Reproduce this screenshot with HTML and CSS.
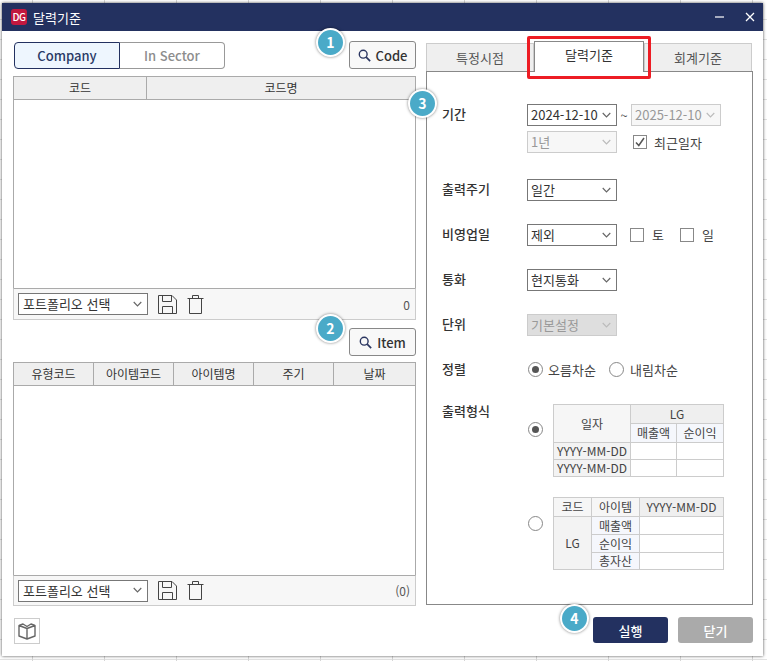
FILE: index.html
```html
<!DOCTYPE html>
<html lang="ko">
<head>
<meta charset="utf-8">
<title>달력기준</title>
<link rel="stylesheet" href="styles.css">
</head>
<body>
<svg width="0" height="0" class="defs">
  <symbol id="chev" viewBox="0 0 10 6"><path d="M.8.8 5 5 9.200.8" fill="none" stroke="currentColor" stroke-width="1.300"/></symbol>
  <symbol id="search" viewBox="0 0 14 14"><circle cx="5.600" cy="5.600" r="4.200" fill="none" stroke="currentColor" stroke-width="1.500"/><path d="m8.800 8.800 4.300 4.300" stroke="currentColor" stroke-width="1.800"/></symbol>
  <symbol id="save" viewBox="0 0 19 19"><path d="M.5.500h13.500l4.500 4.500v13.500H.5z M4.500.5v6h9v-6 M4.500 18.500v-7h10v7" fill="none" stroke="currentColor"/></symbol>
  <symbol id="trash" viewBox="0 0 17 19"><path d="M.5 3.500h16 M2.500 3.500v15h12v-15 M5.500 3.500v-3h6v3" fill="none" stroke="currentColor"/></symbol>
</svg>

<div class="window">
  <header class="titlebar">
    <span class="logo">DG</span>
    <span class="title">달력기준</span>
    <span class="win-ctrl">
      <svg width="10" height="2" viewBox="0 0 10 2"><path d="M0 1h9" stroke="#fff" stroke-width="1.200"/></svg>
      <svg width="10" height="10" viewBox="0 0 10 10"><path d="m1 1 8 8M9 1 1 9" stroke="#fff" stroke-width="1.300"/></svg>
    </span>
  </header>

  <main class="content">
    <section class="left">
      <div class="tool-row">
        <div class="seg">
          <span class="seg-item seg-on">Company</span>
          <span class="seg-item seg-off">In Sector</span>
        </div>
        <button class="find-btn"><svg class="ico-s"><use href="#search"/></svg>Code</button>
      </div>

      <div class="grid grid-a">
        <div class="grid-head head-a"><span class="cell">코드</span><span class="cell">코드명</span></div>
        <div class="grid-body body-a"></div>
        <div class="grid-foot">
          <div class="sel sel-port"><span>포트폴리오 선택</span><svg class="chev"><use href="#chev"/></svg></div>
          <svg class="ico-save"><use href="#save"/></svg>
          <svg class="ico-trash"><use href="#trash"/></svg>
          <span class="count">0</span>
        </div>
      </div>

      <div class="tool-row tool-end">
        <button class="find-btn"><svg class="ico-s"><use href="#search"/></svg>Item</button>
      </div>

      <div class="grid grid-b">
        <div class="grid-head head-b">
          <span class="cell">유형코드</span><span class="cell">아이템코드</span><span class="cell">아이템명</span><span class="cell">주기</span><span class="cell">날짜</span>
        </div>
        <div class="grid-body body-b"></div>
        <div class="grid-foot foot-b">
          <div class="sel sel-port"><span>포트폴리오 선택</span><svg class="chev"><use href="#chev"/></svg></div>
          <svg class="ico-save"><use href="#save"/></svg>
          <svg class="ico-trash"><use href="#trash"/></svg>
          <span class="count">(0)</span>
        </div>
      </div>
    </section>

    <section class="right">
      <nav class="tabs">
        <span class="tab tab-first">특정시점</span>
        <span class="tab tab-active">달력기준</span>
        <span class="tab">회계기준</span>
      </nav>
      <div class="panel">
        <div class="row">
          <label class="lbl">기간</label>
          <div class="period">
            <div class="line">
              <div class="sel"><span>2024-12-10</span><svg class="chev"><use href="#chev"/></svg></div>
              <span class="tilde">~</span>
              <div class="sel sel-off"><span>2025-12-10</span><svg class="chev"><use href="#chev"/></svg></div>
            </div>
            <div class="line line-2">
              <div class="sel sel-off"><span>1년</span><svg class="chev"><use href="#chev"/></svg></div>
              <span class="chk chk-recent"><svg width="10" height="10" viewBox="0 0 10 10"><path d="M1 5.500 3.800 8.500 9 1" fill="none" stroke="#555" stroke-width="1.500"/></svg></span>
              <span class="opt">최근일자</span>
            </div>
          </div>
        </div>
        <div class="row row-freq">
          <label class="lbl">출력주기</label>
          <div class="sel"><span>일간</span><svg class="chev"><use href="#chev"/></svg></div>
        </div>
        <div class="row row-next">
          <label class="lbl">비영업일</label>
          <div class="sel"><span>제외</span><svg class="chev"><use href="#chev"/></svg></div>
          <span class="chk chk-sat"></span><span class="opt opt-day">토</span>
          <span class="chk chk-sun"></span><span class="opt opt-day">일</span>
        </div>
        <div class="row row-next">
          <label class="lbl">통화</label>
          <div class="sel"><span>현지통화</span><svg class="chev"><use href="#chev"/></svg></div>
        </div>
        <div class="row row-next">
          <label class="lbl">단위</label>
          <div class="sel sel-grey"><span>기본설정</span><svg class="chev"><use href="#chev"/></svg></div>
        </div>
        <div class="row row-sort">
          <label class="lbl">정렬</label>
          <span class="radio radio-on radio-sort"></span><span class="opt opt-asc">오름차순</span>
          <span class="radio radio-desc"></span><span class="opt opt-desc">내림차순</span>
        </div>
        <div class="row row-format">
          <label class="lbl lbl-format">출력형식</label>
          <div class="formats">
            <div class="format">
              <span class="radio radio-on radio-f1"></span>
              <table class="sample sample-a">
                <colgroup><col class="c77"><col class="c46"><col class="c47"></colgroup>
                <tr class="r19"><td rowspan="2" class="bg-a">일자</td><td colspan="2" class="bg-b">LG</td></tr>
                <tr class="r19"><td class="bg-c">매출액</td><td class="bg-c">순이익</td></tr>
                <tr class="r17"><td class="bg-d">YYYY-MM-DD</td><td></td><td></td></tr>
                <tr class="r17"><td class="bg-d">YYYY-MM-DD</td><td></td><td></td></tr>
              </table>
            </div>
            <div class="format format-2">
              <span class="radio radio-f2"></span>
              <table class="sample sample-b">
                <colgroup><col class="c38"><col class="c48"><col class="c84"></colgroup>
                <tr class="r19"><td class="bg-a">코드</td><td class="bg-a">아이템</td><td class="bg-b">YYYY-MM-DD</td></tr>
                <tr class="r18"><td rowspan="3" class="bg-d">LG</td><td class="bg-c">매출액</td><td></td></tr>
                <tr class="r18"><td class="bg-c">순이익</td><td></td></tr>
                <tr class="r17"><td class="bg-c">총자산</td><td></td></tr>
              </table>
            </div>
          </div>
        </div>
      </div>
    </section>
  </main>

  <footer class="bottom">
    <button class="book-btn">
      <svg width="18" height="17" viewBox="0 0 18 17"><path d="M1 2.500 9 5.500 17 2.500V13L9 16 1 13ZM9 5.500V16M1 2.500 5 1 9 3.500 13 1 17 2.500" fill="none" stroke="#666" stroke-width="1.400" stroke-linejoin="round"/></svg>
    </button>
    <div class="actions">
      <button class="act act-run">실행</button>
      <button class="act act-close">닫기</button>
    </div>
  </footer>

  <div class="red-box"></div>
  <span class="badge badge-1">1</span>
  <span class="badge badge-2">2</span>
  <span class="badge badge-3">3</span>
  <span class="badge badge-4">4</span>
</div>
</body>
</html>
```
FILE: styles.css
```css
* { box-sizing: border-box; }
html, body { margin: 0; padding: 0; height: 661px; overflow: hidden; }
body {
  font-family: "Noto Sans CJK KR", "Noto Sans", sans-serif;
  font-size: 13px;
  color: #333;
  background-color: #fff;
  background-image:
    repeating-linear-gradient(90deg, transparent 0 32px, #d6d6d6 32px 33px, transparent 33px 72px),
    repeating-linear-gradient(180deg, transparent 0 19px, #e2e2e2 19px 20px);
}
.defs { position: absolute; }
button { font-family: inherit; margin: 0; cursor: pointer; }

.window {
  position: relative;
  width: 761px;
  height: 653px;
  margin: 3px 0 0 2px;
  background: #fff;
  box-shadow: 0 0 3px rgba(0, 0, 0, .7);
  display: flex;
  flex-direction: column;
}

.titlebar {
  height: 28px;
  background: #233160;
  color: #fff;
  display: flex;
  align-items: center;
  padding: 0 8px 0 9px;
  flex: none;
}
.logo {
  width: 16px;
  height: 16px;
  border-radius: 3px;
  background: #c2183f;
  color: #fff;
  font-size: 10px;
  font-weight: 500;
  line-height: 16px;
  text-align: center;
  letter-spacing: -.5px;
}
.title { margin-left: 6px; font-size: 13px; }
.win-ctrl { margin-left: auto; display: flex; align-items: center; gap: 20px; }
.win-ctrl svg { display: block; }

.content { display: flex; gap: 10px; padding: 10px 0 0 11px; flex: none; height: 574px; }
.left { width: 403px; flex: none; }
.right { width: 327px; flex: none; }

.tool-row { height: 28px; display: flex; justify-content: space-between; align-items: flex-end; }
.tool-end { justify-content: flex-end; margin-top: 8px; }
.seg { display: flex; height: 27px; width: 211px; margin-left: 1px; }
.seg-item { display: flex; align-items: center; justify-content: center; font-size: 13px; font-weight: 500; padding-bottom: 1px; }
.seg-on { width: 106px; background: #eef6fe; border: 1px solid #233160; border-radius: 4px 0 0 4px; color: #2a3a66; }
.seg-off { flex: 1; border: 1px solid #999; border-left: 0; border-radius: 0 4px 4px 0; color: #8d8d8d; }
.find-btn {
  width: 67px;
  height: 28px;
  padding: 0;
  display: flex;
  align-items: center;
  justify-content: center;
  gap: 5px;
  background: #f8f8f8;
  border: 1px solid #888;
  border-radius: 3px;
  color: #333;
  font-size: 13px;
  font-weight: 500;
}
.ico-s { width: 13px; height: 13px; color: #2a3560; }

.grid { margin-top: 7px; }
.grid-b { margin-top: 6px; }
.grid-head { display: grid; height: 24px; background: #efefef; border: 1px solid #aaa; font-size: 12px; }
.head-a { grid-template-columns: 132px 1fr; }
.head-b { grid-template-columns: 79px 80px 80px 80px 1fr; }
.cell { display: flex; align-items: center; justify-content: center; border-left: 1px solid #aaa; color: #333; padding-bottom: 1px; }
.cell:first-child { border-left: 0; }
.grid-body { border: 1px solid #aaa; border-width: 0 1px; background: #fff; }
.body-a { height: 188px; }
.body-b { height: 189px; }
.grid-foot {
  height: 32px;
  display: flex;
  align-items: center;
  padding: 0 5px 0 4px;
  background: #f7f7f7;
  border: 1px solid #ccc;
  border-top: 1px solid #aaa;
}
.foot-b { height: 31px; }
.sel {
  width: 90px;
  height: 22px;
  padding: 0 5px 1px 3px;
  display: flex;
  align-items: center;
  justify-content: space-between;
  border: 1px solid #777;
  background: #fff;
  color: #333;
  flex: none;
}
.sel-port { width: 130px; padding-left: 4px; }
.chev { width: 9px; height: 6px; color: #666; flex: none; }
.sel-off { border-color: #ccc; background: #f7f7f7; color: #999; }
.sel-off .chev, .sel-grey .chev { color: #bbb; }
.sel-grey { border-color: #ccc; background: #dedede; color: #999; }
.ico-save { width: 19px; height: 19px; margin-left: 10px; color: #444; }
.ico-trash { width: 17px; height: 19px; margin-left: 10px; color: #444; }
.count { margin-left: auto; color: #555; font-size: 12px; }

.tabs { height: 30px; display: flex; align-items: flex-end; padding-right: 1px; }
.tab {
  width: 108px;
  height: 28px;
  display: flex;
  align-items: center;
  justify-content: center;
  background: #efefef;
  border: 1px solid #ccc;
  border-bottom: 0;
  color: #555;
  font-size: 13px;
}
.tab-active {
  width: 110px;
  height: 31px;
  margin-bottom: -1px;
  padding-bottom: 5px;
  background: #fff;
  border-color: #888;
  color: #333;
  position: relative;
  z-index: 1;
}
.panel { height: 534px; padding: 32px 0 0 15px; border: 1px solid #888; }

.row { display: flex; align-items: flex-start; }
.lbl { width: 85px; flex: none; line-height: 20px; font-weight: 500; color: #333; }
.line { display: flex; align-items: center; }
.line-2 { margin-top: 5px; }
.tilde { width: 14px; text-align: center; color: #555; }
.row-freq { margin-top: 26px; }
.row-next { margin-top: 23px; }
.chk { width: 14px; height: 14px; border: 1px solid #888; background: #fff; flex: none; display: flex; align-items: center; justify-content: center; margin-top: 4px; }
.chk-recent { margin: 0 0 0 16px; }
.opt { color: #444; line-height: 21px; }
.line-2 .opt { margin-left: 7px; }
.chk-sat { margin-left: 13px; }
.opt-day { margin-left: 8px; width: 28px; }
.row-sort { margin-top: 25px; height: 16px; align-items: center; }
.radio { width: 15px; height: 15px; border: 1px solid #888; border-radius: 50%; background: #fff; flex: none; position: relative; display: block; }
.radio-on::after { content: ""; position: absolute; left: 3px; top: 3px; width: 7px; height: 7px; border-radius: 50%; background: #555; }
.radio-sort { margin-left: 1px; }
.opt-asc { margin-left: 5px; width: 61px; }
.opt-desc { margin-left: 6px; }
.row-format { margin-top: 27px; }
.lbl-format { line-height: 14px; }
.format { display: flex; align-items: flex-start; }
.format-2 { margin-top: 20px; }
.radio-f1 { margin: 18px 10px 0 1px; }
.radio-f2 { margin: 19px 10px 0 1px; }
.sample { border-collapse: collapse; table-layout: fixed; width: 170px; font-size: 12px; color: #444; }
.sample td { border: 1px solid #ccc; padding: 0; text-align: center; line-height: 14px; white-space: nowrap; overflow: hidden; }
.c77 { width: 77px; } .c46 { width: 46px; } .c47 { width: 47px; } .c38 { width: 38px; } .c48 { width: 48px; } .c84 { width: 84px; }
.r19 { height: 19px; } .r18 { height: 18px; } .r17 { height: 17px; }
.bg-a { background: #f6f6f6; }
.bg-b { background: #efefef; }
.bg-c { background: #f5f7fc; }
.bg-d { background: #f3f3f3; }

.bottom { display: flex; justify-content: space-between; padding: 10px 10px 0 12px; flex: none; }
.book-btn { width: 26px; height: 26px; margin-top: 3px; padding: 0; background: #fff; border: 1px solid #ccc; display: flex; align-items: center; justify-content: center; }
.actions { display: flex; gap: 10px; margin-top: 2px; }
.act { width: 75px; height: 26px; border: 0; border-radius: 3px; color: #fff; font-size: 13px; font-weight: 500; padding: 0; }
.act-run { background: #233160; }
.act-close { background: #aaa; }

.red-box {
  position: absolute;
  left: 525px;
  top: 33px;
  width: 124px;
  height: 43px;
  border: 3.500px solid #ed1c24;
  border-radius: 2px;
  z-index: 2;
}
.badge {
  position: absolute;
  width: 29px;
  height: 29px;
  border-radius: 50%;
  border: 2px solid #fff;
  background: #4aaac8;
  color: #fff;
  font-size: 14px;
  font-weight: 700;
  line-height: 24px;
  text-align: center;
  box-shadow: 0 0 3px rgba(0, 0, 0, .5);
  z-index: 3;
}
.badge-1 { left: 314px; top: 25px; }
.badge-2 { left: 314px; top: 311px; }
.badge-3 { left: 406px; top: 86px; }
.badge-4 { left: 558px; top: 601px; }
```
